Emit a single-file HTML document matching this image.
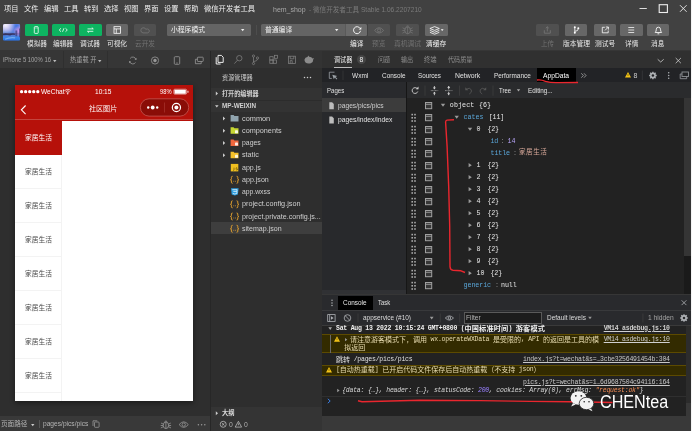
<!DOCTYPE html>
<html lang="zh-CN">
<head>
<meta charset="utf-8">
<title>hem_shop - 微信开发者工具 Stable 1.06.2207210</title>
<style>
*{box-sizing:border-box;margin:0;padding:0}
html,body{width:692px;height:431px;overflow:hidden;background:#2c2c2c}
body{font-family:"Liberation Sans","Noto Sans CJK SC",sans-serif;font-size:7.3px;color:#ddd;position:relative;line-height:1}
#w{position:absolute;left:0;top:0;width:692px;height:431px;will-change:transform;filter:blur(.3px)}
.a{position:absolute;white-space:nowrap}
.t{position:absolute;white-space:pre;line-height:12px;height:12px;transform-origin:0 50%}
.m{font-family:"Liberation Mono","Noto Sans CJK SC",monospace}
.b{font-weight:bold}
.i{font-style:italic}
.u{text-decoration:underline}
svg{position:absolute;overflow:visible}
.tb{position:absolute;top:24px;width:22.5px;height:12px;border-radius:1.5px;background:#676767}
.tb.g{background:#0db461}
.tb.d{background:#505050}
.tb svg{left:0;top:0}
.sel{position:absolute;top:24px;height:12px;background:#646464;border-radius:1.5px}
.cat{position:absolute;left:0;width:47.7px;height:34px;border-bottom:1px solid #f3f3f3;border-right:1px solid #f3f3f3;background:#fff}
.vd{position:absolute;width:1px;background:#4a4a4a}
</style>
</head>
<body>
<div id="w">
<div class="a" style="left:0;top:0;width:692px;height:51px;background:#414141"></div>
<div class="a" style="left:0;top:50.400px;width:692px;height:.7px;background:#363636"></div>
<span id="t0" class="t" style="left:3.50px;top:3.30px;font-size:7.30px;color:#eee;transform:scaleX(0.9936);">项目</span>
<span id="t1" class="t" style="left:24.00px;top:3.30px;font-size:7.30px;color:#eee;transform:scaleX(0.9936);">文件</span>
<span id="t2" class="t" style="left:44.00px;top:3.30px;font-size:7.30px;color:#eee;transform:scaleX(0.9936);">编辑</span>
<span id="t3" class="t" style="left:64.00px;top:3.30px;font-size:7.30px;color:#eee;transform:scaleX(0.9936);">工具</span>
<span id="t4" class="t" style="left:84.00px;top:3.30px;font-size:7.30px;color:#eee;transform:scaleX(0.9936);">转到</span>
<span id="t5" class="t" style="left:104.00px;top:3.30px;font-size:7.30px;color:#eee;transform:scaleX(0.9936);">选择</span>
<span id="t6" class="t" style="left:124.00px;top:3.30px;font-size:7.30px;color:#eee;transform:scaleX(0.9936);">视图</span>
<span id="t7" class="t" style="left:144.00px;top:3.30px;font-size:7.30px;color:#eee;transform:scaleX(0.9936);">界面</span>
<span id="t8" class="t" style="left:164.00px;top:3.30px;font-size:7.30px;color:#eee;transform:scaleX(0.9936);">设置</span>
<span id="t9" class="t" style="left:184.00px;top:3.30px;font-size:7.30px;color:#eee;transform:scaleX(0.9936);">帮助</span>
<span id="t10" class="t" style="left:204.00px;top:3.30px;font-size:7.30px;color:#eee;">微信开发者工具</span>
<span id="t11" class="t" style="left:273.20px;top:3.50px;font-size:7.60px;color:#a8a8a8;transform:scaleX(0.9191);">hem_shop</span>
<span id="t12" class="t" style="left:309.00px;top:3.50px;font-size:7.30px;color:#7a7a7a;transform:scaleX(0.9022);">- 微信开发者工具 Stable 1.06.2207210</span>
<svg style="left:630px;top:0" width="62" height="18" viewBox="630 0 62 18"><path d="M639.500 8.500h7.300" stroke="#ddd" stroke-width="1" fill="none"/><rect x="659.200" y="4.700" width="8.200" height="7.800" stroke="#eee" stroke-width="1.100" fill="none"/><path d="M680 5.200l6.600 6.600M686.600 5.200l-6.600 6.600" stroke="#eee" stroke-width=".9" fill="none"/></svg>
<svg style="left:3px;top:23.800px" width="17.200" height="16.800" viewBox="0 0 17 17" preserveAspectRatio="none"><defs><linearGradient id="av" x1="0" y1="0" x2="0" y2="1"><stop offset="0" stop-color="#b9a8ec"/><stop offset=".3" stop-color="#8f8fe6"/><stop offset=".5" stop-color="#5f86dc"/><stop offset=".58" stop-color="#4a4a86"/><stop offset=".64" stop-color="#5a78d0"/><stop offset=".8" stop-color="#3a86e6"/><stop offset="1" stop-color="#2b6fe2"/></linearGradient><radialGradient id="av2" cx=".15" cy=".08" r=".55"><stop offset="0" stop-color="#fff" stop-opacity=".85"/><stop offset="1" stop-color="#fff" stop-opacity="0"/></radialGradient><radialGradient id="av3" cx=".8" cy=".12" r=".5"><stop offset="0" stop-color="#2f6fe0" stop-opacity=".9"/><stop offset="1" stop-color="#2f6fe0" stop-opacity="0"/></radialGradient><radialGradient id="av4" cx=".95" cy=".42" r=".35"><stop offset="0" stop-color="#e49ae6" stop-opacity=".9"/><stop offset="1" stop-color="#e49ae6" stop-opacity="0"/></radialGradient><clipPath id="avc"><rect width="17" height="17" rx="1.600"/></clipPath></defs><g clip-path="url(#avc)"><rect width="17" height="17" fill="url(#av)"/><rect width="17" height="17" fill="url(#av3)"/><rect width="17" height="17" fill="url(#av2)"/><rect width="17" height="17" fill="url(#av4)"/><path d="M0 10.200q2-1.200 4-.6l2.500.3 3-.3 2.500.2v1.200l-3-.2-2 .8-3-.5-4 .2z" fill="#2a2448" opacity=".8"/><path d="M12.300 6.500h1.800v6h-1.800zM15.800 4.500h1.200v9h-1.200z" fill="#3a3a78" opacity=".7"/><path d="M2 15.500q5-2.500 10-1.500" stroke="#9cc4f6" stroke-width="1.200" fill="none" opacity=".6"/></g></svg>
<div class="tb g" style="left:25px"><svg width="22.500" height="12" viewBox="0 0 22.500 12"><rect x="9.300" y="2.600" width="3.900" height="6.800" rx=".8" stroke="#fff" stroke-width=".8" fill="none"/><path d="M9.300 4h3.900" stroke="#fff" stroke-width=".5"/></svg></div>
<div class="tb g" style="left:52px"><svg width="22.500" height="12" viewBox="0 0 22.500 12"><path d="M9 4.300L7.200 6 9 7.700M13.500 4.300L15.300 6l-1.800 1.700M12 4.200l-1.500 3.600" stroke="#fff" stroke-width=".8" fill="none"/></svg></div>
<div class="tb g" style="left:79px"><svg width="22.500" height="12" viewBox="0 0 22.500 12"><path d="M8.500 4.900h5.800M12.800 3.600l1.500 1.300M14.300 7.300H8.500M10 8.600L8.500 7.300" stroke="#fff" stroke-width=".8" fill="none"/></svg></div>
<div class="tb" style="left:105.500px"><svg width="22.500" height="12" viewBox="0 0 22.500 12"><rect x="8" y="2.700" width="6.500" height="6.600" stroke="#fff" stroke-width=".8" fill="none"/><path d="M8 4.900h6.500M10.300 4.900v4.400" stroke="#fff" stroke-width=".8" fill="none"/></svg></div>
<div class="tb d" style="left:133.500px"><svg width="22.500" height="12" viewBox="0 0 22.500 12"><path d="M9 8.900A2.600 2.600 0 1 1 11.900 5.500A2 2 0 1 1 13.700 8.900Z" stroke="#767676" stroke-width=".8" fill="none"/></svg></div>
<span id="t13" class="t" style="left:26.70px;top:37.70px;font-size:7.00px;color:#e6e6e6;transform:scaleX(0.9524);">模拟器</span>
<span id="t14" class="t" style="left:53.40px;top:37.70px;font-size:7.00px;color:#e6e6e6;transform:scaleX(0.9524);">编辑器</span>
<span id="t15" class="t" style="left:80.20px;top:37.70px;font-size:7.00px;color:#e6e6e6;transform:scaleX(0.9524);">调试器</span>
<span id="t16" class="t" style="left:107.00px;top:37.70px;font-size:7.00px;color:#e6e6e6;transform:scaleX(0.9524);">可视化</span>
<span id="t17" class="t" style="left:134.50px;top:37.70px;font-size:7.00px;color:#727272;transform:scaleX(0.9524);">云开发</span>
<div class="sel" style="left:167px;width:84.200px"></div>
<span id="t18" class="t" style="left:171.30px;top:24.00px;font-size:7.00px;color:#f0f0f0;transform:scaleX(0.9714);">小程序模式</span>
<svg style="left:240.500px;top:28.500px" width="3.400" height="2.600" viewBox="0 0 4 3"><path d="M0 0h4L2 2.600z" fill="#eee"/></svg>
<div class="vd" style="left:256.200px;top:25px;height:10px;background:#4d4d4d"></div>
<div class="sel" style="left:261.200px;width:84px;border-radius:1.500px 0 0 1.500px"></div>
<span id="t19" class="t" style="left:265.30px;top:24.00px;font-size:7.00px;color:#f0f0f0;transform:scaleX(0.9714);">普通编译</span>
<svg style="left:335px;top:28.500px" width="3.400" height="2.600" viewBox="0 0 4 3"><path d="M0 0h4L2 2.600z" fill="#eee"/></svg>
<div class="tb" style="left:345.200px;width:22.300px;border-radius:0 1.500px 1.500px 0;background:#6b6b6b;border-left:.5px solid #5a5a5a"><svg width="22" height="12" viewBox="0 0 22 12"><path d="M14 4.300A3.500 3.500 0 1 0 14.500 6.800" stroke="#fff" stroke-width=".9" fill="none"/><path d="M15.300 3v2.600h-2.600z" fill="#fff"/></svg></div>
<div class="tb d" style="left:367.600px;border-radius:0 1.500px 1.500px 0"><svg width="22.500" height="12" viewBox="0 0 22.500 12"><path d="M6.600 6.400q4.500-5.400 9 0q-4.500 5.400-9 0z" stroke="#777" stroke-width=".8" fill="none"/><circle cx="11.100" cy="6.400" r="1.600" stroke="#777" stroke-width=".8" fill="none"/></svg></div>
<div class="tb d" style="left:396.300px"><svg width="22.500" height="12" viewBox="0 0 22.500 12"><ellipse cx="11.600" cy="6.300" rx="2.800" ry="3.500" stroke="#777" stroke-width=".8" fill="none"/><path d="M11.600 2.800v7M10.300 2.400q1.300-1.200 2.600 0M6.600 3.800l2.500 1.300M16.600 3.800l-2.500 1.300M6.400 9.200l2.700-1.500M16.800 9.200l-2.700-1.500M6.300 6.500h2.500M16.900 6.500h-2.500" stroke="#777" stroke-width=".7" fill="none"/></svg></div>
<div class="tb" style="left:425.300px"><svg width="22.500" height="12" viewBox="0 0 22.500 12"><path d="M4.900 4.500l4.700-1.900 4.700 1.900-4.700 1.900zM4.900 6.400l4.700 1.900 4.700-1.900M4.900 8.300l4.700 1.900 4.700-1.900" stroke="#fff" stroke-width=".8" fill="none" stroke-linejoin="round"/><path d="M15.800 5.200h2.800L17.200 7z" fill="#fff"/></svg></div>
<span id="t20" class="t" style="left:350.00px;top:37.70px;font-size:7.00px;color:#f0f0f0;transform:scaleX(0.9571);">编译</span>
<span id="t21" class="t" style="left:372.30px;top:37.70px;font-size:7.00px;color:#727272;transform:scaleX(0.9571);">预览</span>
<span id="t22" class="t" style="left:394.00px;top:37.70px;font-size:7.00px;color:#727272;transform:scaleX(0.9643);">真机调试</span>
<span id="t23" class="t" style="left:426.30px;top:37.70px;font-size:7.00px;color:#f0f0f0;transform:scaleX(0.9714);">清缓存</span>
<div class="tb d" style="left:536px"><svg width="22.500" height="12" viewBox="0 0 22.500 12"><path d="M8.300 6.200v3h6v-3M11.300 7.500V2.800M9.800 4.200l1.500-1.400 1.500 1.400" stroke="#777" stroke-width=".8" fill="none"/></svg></div>
<div class="tb" style="left:564.800px"><svg width="22.500" height="12" viewBox="0 0 22.500 12"><path d="M9.800 3.500v5M9.800 7.300q3.500 0 3.500-2.800" stroke="#fff" stroke-width=".8" fill="none"/><circle cx="9.800" cy="3.200" r="1" fill="#fff"/><circle cx="9.800" cy="8.800" r="1" fill="#fff"/><circle cx="13.300" cy="4.300" r="1" fill="#fff"/></svg></div>
<div class="tb" style="left:593.700px"><svg width="22.500" height="12" viewBox="0 0 22.500 12"><path d="M10.800 3.300H8.300v5.500h5.900V6.500M11.800 3h2.600v2.600M14.200 3.200L11 6.400" stroke="#fff" stroke-width=".8" fill="none"/></svg></div>
<div class="tb" style="left:620.200px"><svg width="22.500" height="12" viewBox="0 0 22.500 12"><path d="M8.300 3.500h5.900M8.300 6h5.900M8.300 8.500h5.900" stroke="#fff" stroke-width=".75" fill="none"/></svg></div>
<div class="tb" style="left:646.900px"><svg width="22.500" height="12" viewBox="0 0 22.500 12"><path d="M8.200 8.500h6.400q-1.100-1.100-1.100-3.200a2.100 2.100 0 0 0-4.200 0q0 2.100-1.100 3.200zM10.500 9.800h1.800" stroke="#fff" stroke-width=".85" fill="none"/></svg></div>
<span id="t24" class="t" style="left:540.80px;top:37.70px;font-size:7.00px;color:#727272;transform:scaleX(0.9214);">上传</span>
<span id="t25" class="t" style="left:562.50px;top:37.70px;font-size:7.00px;color:#e6e6e6;transform:scaleX(0.9643);">版本管理</span>
<span id="t26" class="t" style="left:595.00px;top:37.70px;font-size:7.00px;color:#e6e6e6;transform:scaleX(0.9619);">测试号</span>
<span id="t27" class="t" style="left:624.70px;top:37.70px;font-size:7.00px;color:#e6e6e6;transform:scaleX(0.9500);">详情</span>
<span id="t28" class="t" style="left:651.30px;top:37.70px;font-size:7.00px;color:#e6e6e6;transform:scaleX(0.9500);">消息</span>
<div class="a" style="left:0;top:51px;width:211px;height:17.300px;background:#363636"></div>
<div class="a" style="left:0;top:68.300px;width:211px;height:348px;background:#2e2e2e"></div>
<span id="t29" class="t" style="left:3.00px;top:54.30px;font-size:6.80px;color:#a4a4a4;transform:scaleX(0.8639);">iPhone 5 100% 16</span>
<svg style="left:53px;top:59.500px" width="3.500" height="2.500" viewBox="0 0 4 3"><path d="M0 0h4L2 2.600z" fill="#bbb"/></svg>
<div class="vd" style="left:63px;top:51px;height:17px;background:#2f2f2f"></div>
<span id="t30" class="t" style="left:69.50px;top:54.30px;font-size:6.80px;color:#a4a4a4;transform:scaleX(0.9113);">热重载 开</span>
<svg style="left:97.500px;top:59.500px" width="3.500" height="2.500" viewBox="0 0 4 3"><path d="M0 0h4L2 2.600z" fill="#bbb"/></svg>
<div class="vd" style="left:107px;top:51px;height:17px;background:#2f2f2f"></div>
<svg style="left:0;top:0" width="211" height="70" viewBox="0 0 211 70"><g stroke="#989898" stroke-width=".8" fill="none"><path d="M135.900 59.500a3.200 3.200 0 0 0-5.800-1M129.700 61.500a3.200 3.200 0 0 0 5.800 1"/><circle cx="155" cy="60.500" r="3.600"/><rect x="174.300" y="56.700" width="5.400" height="7.600" rx=".9"/><path d="M176.300 63h1.400"/><rect x="197.400" y="57.200" width="5.800" height="4.300" rx=".6"/><path d="M197.400 59.300h-2v4.400h5.800v-2.200"/></g><circle cx="155" cy="60.500" r="1.700" fill="#989898"/><path d="M136.500 57.800v1.900h-1.900zM129.100 63.200v-1.900h1.900z" fill="#989898"/></svg>
<div class="a" style="left:14.600px;top:85px;width:178.100px;height:316.200px;background:#fff;overflow:hidden;box-shadow:0 2px 5px rgba(0,0,0,.4)">
<div class="a" style="left:0;top:0;width:179px;height:35.800px;background:#b6110a"></div>
<div class="a" style="left:0;top:34.400px;width:179px;height:.6px;background:#c4453e"></div>
<div class="cat" style="top:35.8px;background:#b6110a;border-color:#b6110a"></div>
<div class="cat" style="top:69.8px"></div>
<div class="cat" style="top:103.8px"></div>
<div class="cat" style="top:137.8px"></div>
<div class="cat" style="top:171.8px"></div>
<div class="cat" style="top:205.8px"></div>
<div class="cat" style="top:239.8px"></div>
<div class="cat" style="top:273.8px"></div>
<div class="cat" style="top:307.8px"></div>
</div>
<span id="t31" class="t" style="left:24.80px;top:132.10px;font-size:6.80px;color:#fff;transform:scaleX(0.9894);">家居生活</span>
<span id="t32" class="t" style="left:24.80px;top:166.10px;font-size:6.80px;color:#484848;transform:scaleX(0.9894);">家居生活</span>
<span id="t33" class="t" style="left:24.80px;top:200.10px;font-size:6.80px;color:#484848;transform:scaleX(0.9894);">家居生活</span>
<span id="t34" class="t" style="left:24.80px;top:234.10px;font-size:6.80px;color:#484848;transform:scaleX(0.9894);">家居生活</span>
<span id="t35" class="t" style="left:24.80px;top:268.10px;font-size:6.80px;color:#484848;transform:scaleX(0.9894);">家居生活</span>
<span id="t36" class="t" style="left:24.80px;top:302.10px;font-size:6.80px;color:#484848;transform:scaleX(0.9894);">家居生活</span>
<span id="t37" class="t" style="left:24.80px;top:336.10px;font-size:6.80px;color:#484848;transform:scaleX(0.9894);">家居生活</span>
<span id="t38" class="t" style="left:24.80px;top:370.10px;font-size:6.80px;color:#484848;transform:scaleX(0.9894);">家居生活</span>
<svg style="left:0;top:0" width="211" height="125" viewBox="0 0 211 125"><g fill="#fff"><circle cx="21.600" cy="91.700" r="1.650"/><circle cx="25.650" cy="91.700" r="1.650"/><circle cx="29.700" cy="91.700" r="1.650"/><circle cx="33.750" cy="91.700" r="1.650"/><circle cx="37.800" cy="91.700" r="1.650"/><circle cx="67.700" cy="93.700" r=".7"/><rect x="174.500" y="89.700" width="11.300" height="4" rx=".5"/><path d="M187.500 90.700h.9v2h-.9z"/></g><rect x="173.800" y="89.200" width="12.800" height="5" rx="1" fill="none" stroke="#fff" stroke-width=".5"/><path d="M64.600 90.700a4.400 4.400 0 0 1 6.200 0M65.650 91.800a2.900 2.900 0 0 1 4.100 0M66.700 92.800a1.500 1.500 0 0 1 2 0" stroke="#fff" stroke-width=".75" fill="none"/><path d="M25.600 105.500l-4.200 4.300 4.200 4.300" stroke="#fff" stroke-width="1.100" fill="none"/><rect x="140.400" y="98.800" width="48.300" height="17.300" rx="8.650" fill="#8a0d07" stroke="#c9625c" stroke-width=".7"/><path d="M164.500 102.500v10" stroke="#b5463f" stroke-width=".5"/><g fill="#fff"><circle cx="148.200" cy="107.500" r="1.200"/><circle cx="152.700" cy="107.500" r="1.900"/><circle cx="157.200" cy="107.500" r="1.200"/><circle cx="176.400" cy="107.500" r="2"/></g><circle cx="176.400" cy="107.500" r="4.100" fill="none" stroke="#fff" stroke-width="1.200"/></svg>
<span id="t39" class="t" style="left:41.00px;top:85.70px;font-size:7.00px;color:#fff;transform:scaleX(0.9376);">WeChat</span>
<span id="t40" class="t" style="left:95.30px;top:85.70px;font-size:6.90px;color:#fff;transform:scaleX(0.9507);">10:15</span>
<span id="t41" class="t" style="left:159.70px;top:85.70px;font-size:6.30px;color:#fff;transform:scaleX(0.9120);">98%</span>
<span id="t42" class="t" style="left:89.40px;top:103.30px;font-size:7.20px;color:#fff;transform:scaleX(0.9803);">社区图片</span>
<div class="a" style="left:0;top:416px;width:692px;height:15px;background:#393939"></div>
<span id="t43" class="t" style="left:1.00px;top:418.00px;font-size:6.80px;color:#b4b4b4;transform:scaleX(0.9747);">页面路径</span>
<svg style="left:30.500px;top:423.500px" width="3.500" height="2.500" viewBox="0 0 4 3"><path d="M0 0h4L2 2.600z" fill="#ccc"/></svg>
<div class="vd" style="left:38.500px;top:420px;height:8px;background:#555"></div>
<span id="t44" class="t" style="left:43.00px;top:418.00px;font-size:6.80px;color:#b4b4b4;transform:scaleX(0.9745);">pages/pics/pics</span>
<svg style="left:0;top:416px" width="211" height="15" viewBox="0 416 211 15"><g stroke="#9c9c9c" stroke-width=".75" fill="none"><rect x="94.500" y="422" width="4.600" height="5.300" rx=".7"/><path d="M93 426v-5.200h4.300"/><ellipse cx="165.900" cy="425.300" rx="2.700" ry="3.300"/><path d="M165.900 422v6.600M164.600 421.600q1.300-1.200 2.600 0M161 423l2.400 1.200M170.800 423l-2.400 1.200M160.800 428l2.600-1.400M171 428l-2.600-1.400M160.700 425.500h2.500M171.100 425.500h-2.500"/><path d="M179.100 424.600q4.600-5.600 9.200 0q-4.600 5.600-9.200 0z"/><circle cx="183.700" cy="424.600" r="1.700"/></g><g fill="#999"><circle cx="198.400" cy="424.700" r=".75"/><circle cx="201.600" cy="424.700" r=".75"/><circle cx="204.800" cy="424.700" r=".75"/></g></svg>
<div class="a" style="left:211px;top:51px;width:111px;height:365px;background:#2e2e2e"></div>
<div class="a" style="left:211px;top:51px;width:111px;height:16.800px;background:#333"></div>
<div class="a" style="left:209.900px;top:51px;width:1px;height:380px;background:#272727"></div>
<svg style="left:211px;top:51px" width="111" height="17" viewBox="211 51 111 17"><g stroke="#fff" stroke-width=".9" fill="none"><path d="M216.200 57.200v6.800h4.400"/><path d="M218 55.400h3.400l1.800 1.800v5.200h-5.200z"/></g><g stroke="#828282" stroke-width=".75" fill="none"><circle cx="239.300" cy="58.200" r="2.700"/><path d="M237.400 60.300l-3 3.300"/><circle cx="253.500" cy="56" r="1.100"/><circle cx="253.500" cy="63.500" r="1.100"/><circle cx="257.500" cy="58" r="1.100"/><path d="M253.500 57.100v5.300M257.500 59.100q0 2-4 2.500"/><rect x="269.800" y="60" width="3.300" height="3.300"/><rect x="273.100" y="60" width="3.300" height="3.300"/><rect x="269.800" y="56.700" width="3.300" height="3.300"/><rect x="274.500" y="55.300" width="3" height="3"/><rect x="288.400" y="56.200" width="7.200" height="7.200"/><path d="M290.200 56.200v2.600h3.600v-2.600M290.200 63.400v-2.800h2v2.800"/></g><path d="M304.500 59.500q.5-2.200 3-2.500l.8-1.500.9 1.300q2.500.2 3.300 1.700l1.500-.5-.8 1.500q.3 2.500-2.400 3.700-3.300 1-5.300-.8-1.200-1.300-1-2.900z" fill="#8c8c8c"/></svg>
<span id="t45" class="t" style="left:222.30px;top:71.70px;font-size:6.60px;color:#c8c8c8;transform:scaleX(0.9312);">资源管理器</span>
<svg style="left:303px;top:76px" width="10" height="3" viewBox="0 0 10 3"><g fill="#ccc"><circle cx="1.500" cy="1.500" r=".75"/><circle cx="4.500" cy="1.500" r=".75"/><circle cx="7.500" cy="1.500" r=".75"/></g></svg>
<div class="a" style="left:211px;top:87.600px;width:111px;height:24.400px;background:#333"></div>
<div class="a" style="left:211px;top:99.600px;width:111px;height:.5px;background:#2c2c2c"></div>
<svg style="left:211px;top:87px" width="111" height="30" viewBox="211 87 111 30"><path d="M215.800 91.500l2.200 2-2.200 2z" fill="#ccc"/><path d="M215 105.200h3.600l-1.800 2.300z" fill="#ccc"/></svg>
<span id="t46" class="t b" style="left:222.30px;top:87.60px;font-size:6.60px;color:#d0d0d0;transform:scaleX(0.9276);">打开的编辑器</span>
<span id="t47" class="t b" style="left:222.30px;top:100.20px;font-size:6.70px;color:#d0d0d0;transform:scaleX(0.9488);">MP-WEIXIN</span>
<div class="a" style="left:211px;top:222px;width:111px;height:12.100px;background:#3e3e3e"></div>
<span id="t48" class="t" style="left:242.20px;top:112.60px;font-size:7.60px;color:#cfcfcf;transform:scaleX(0.9682);">common</span>
<span id="t49" class="t" style="left:242.20px;top:124.84px;font-size:7.60px;color:#cfcfcf;transform:scaleX(0.9571);">components</span>
<span id="t50" class="t" style="left:242.20px;top:137.08px;font-size:7.60px;color:#cfcfcf;transform:scaleX(0.9081);">pages</span>
<span id="t51" class="t" style="left:242.20px;top:149.32px;font-size:7.60px;color:#cfcfcf;transform:scaleX(0.9473);">static</span>
<span id="t52" class="t" style="left:242.20px;top:161.56px;font-size:7.60px;color:#cfcfcf;transform:scaleX(0.9277);">app.js</span>
<span id="t53" class="t" style="left:242.20px;top:173.80px;font-size:7.60px;color:#cfcfcf;transform:scaleX(0.9332);">app.json</span>
<span id="t54" class="t" style="left:242.20px;top:186.04px;font-size:7.60px;color:#cfcfcf;transform:scaleX(0.8940);">app.wxss</span>
<span id="t55" class="t" style="left:242.20px;top:198.28px;font-size:7.60px;color:#cfcfcf;transform:scaleX(0.9556);">project.config.json</span>
<span id="t56" class="t" style="left:242.20px;top:210.52px;font-size:7.60px;color:#cfcfcf;transform:scaleX(0.9381);">project.private.config.js...</span>
<span id="t57" class="t" style="left:242.20px;top:222.76px;font-size:7.60px;color:#cfcfcf;transform:scaleX(0.9287);">sitemap.json</span>
<svg style="left:211px;top:110px" width="111" height="130" viewBox="211 110 111 130"><path d="M223 116.6l2.200 2-2.200 2z" fill="#ccc"/><path d="M230.600 115.1h3l.8.900h4.100v5.600h-7.900z" fill="#90a4ae"/><path d="M223 128.8l2.200 2-2.200 2z" fill="#ccc"/><path d="M230.600 127.3h3l.8.900h4.100v5.600h-7.900z" fill="#c6d733"/><rect x="235" y="130.3" width="3" height="3" rx=".6" fill="#fff" opacity=".85"/><path d="M223 141.1l2.200 2-2.200 2z" fill="#ccc"/><path d="M230.600 139.6h3l.8.900h4.100v5.600h-7.900z" fill="#f0673e"/><rect x="235" y="142.6" width="3" height="3" rx=".6" fill="#fff" opacity=".85"/><path d="M223 153.3l2.200 2-2.200 2z" fill="#ccc"/><path d="M230.600 151.8h3l.8.900h4.100v5.600h-7.900z" fill="#f6c12a"/><rect x="235" y="154.8" width="3" height="3" rx=".6" fill="#fff" opacity=".85"/><rect x="230.800" y="163.9" width="7.500" height="7.500" fill="#f0c020"/><path d="M234 167.6v2.200q0 .8-.9.500M237.200 167.8q-1.300-.4-1.300.4t1.300.8 0 1q-.8 0-1.400-.3" stroke="#5a4500" stroke-width=".6" fill="none"/><path d="M232.600 176.3q-1.200 0-1.200 1v1.500q0 1-.9 1 .9 0 .9 1v1.500q0 1 1.200 1M236.600 176.3q1.200 0 1.200 1v1.500q0 1 .9 1-.9 0-.9 1v1.500q0 1-1.200 1" stroke="#eea82e" stroke-width=".9" fill="none"/><path d="M233.400 181.3h.8M235 181.3h.8" stroke="#eea82e" stroke-width=".8"/><path d="M231 188.3h7.600l-.7 6.300-3.100 1-3.100-1z" fill="#2d9ee0"/><path d="M232.300 189.7h4.800l-.2 1.700h-3.600M237 191.6l-.2 1.800-2 .6-2-.6" stroke="#fff" stroke-width=".7" fill="none"/><path d="M232.600 200.8q-1.200 0-1.200 1v1.500q0 1-.9 1 .9 0 .9 1v1.500q0 1 1.200 1M236.600 200.8q1.200 0 1.200 1v1.500q0 1 .9 1-.9 0-.9 1v1.500q0 1-1.200 1" stroke="#eea82e" stroke-width=".9" fill="none"/><path d="M233.400 205.8h.8M235 205.8h.8" stroke="#eea82e" stroke-width=".8"/><path d="M232.600 213.0q-1.200 0-1.200 1v1.500q0 1-.9 1 .9 0 .9 1v1.500q0 1 1.200 1M236.600 213.0q1.200 0 1.200 1v1.500q0 1 .9 1-.9 0-.9 1v1.500q0 1-1.200 1" stroke="#eea82e" stroke-width=".9" fill="none"/><path d="M233.400 218.0h.8M235 218.0h.8" stroke="#eea82e" stroke-width=".8"/><path d="M232.600 225.3q-1.200 0-1.200 1v1.500q0 1-.9 1 .9 0 .9 1v1.500q0 1 1.200 1M236.600 225.3q1.200 0 1.200 1v1.500q0 1 .9 1-.9 0-.9 1v1.500q0 1-1.200 1" stroke="#eea82e" stroke-width=".9" fill="none"/><path d="M233.400 230.3h.8M235 230.3h.8" stroke="#eea82e" stroke-width=".8"/></svg>
<div class="a" style="left:211px;top:407px;width:111px;height:24px;background:#343434"></div>
<svg style="left:211px;top:407px" width="111" height="24" viewBox="211 407 111 24"><path d="M215.800 411.200l2.200 2-2.200 2z" fill="#ccc"/><g stroke="#c8c8c8" stroke-width=".7" fill="none"><circle cx="223.200" cy="424.300" r="3"/><path d="M221.900 423l2.600 2.600M224.500 423l-2.600 2.600"/><path d="M238.400 421.300l3.200 5.800h-6.400z"/><path d="M238.400 423.300v2"/></g></svg>
<span id="t58" class="t b" style="left:222.30px;top:407.30px;font-size:6.60px;color:#d8d8d8;transform:scaleX(0.9479);">大纲</span>
<span id="t59" class="t" style="left:229.00px;top:419.00px;font-size:6.80px;color:#b0b0b0;letter-spacing:-0.281px;">0</span>
<span id="t60" class="t" style="left:244.00px;top:419.00px;font-size:6.80px;color:#b0b0b0;letter-spacing:-0.281px;">0</span>
<div class="a" style="left:322px;top:51px;width:370px;height:365px;background:#222"></div>
<div class="a" style="left:321.500px;top:51px;width:1px;height:365px;background:#1a1a1a"></div>
<div class="a" style="left:322px;top:51px;width:370px;height:17px;background:#303030"></div>
<span id="t61" class="t" style="left:333.60px;top:53.50px;font-size:6.40px;color:#f0f0f0;transform:scaleX(0.9493);">调试器</span>
<div class="a" style="left:333.600px;top:66.600px;width:18.200px;height:.8px;background:#bdbdbd"></div>
<div class="a" style="left:357px;top:55px;width:9px;height:9px;border-radius:5px;background:#454545"></div>
<span id="t62" class="t" style="left:359.60px;top:53.70px;font-size:6.80px;color:#eee;letter-spacing:0.019px;">8</span>
<span id="t63" class="t" style="left:377.80px;top:53.50px;font-size:6.40px;color:#8e8e8e;transform:scaleX(0.9311);">问题</span>
<span id="t64" class="t" style="left:400.90px;top:53.50px;font-size:6.40px;color:#8e8e8e;transform:scaleX(0.9545);">输出</span>
<span id="t65" class="t" style="left:424.00px;top:53.50px;font-size:6.40px;color:#8e8e8e;transform:scaleX(0.9858);">终端</span>
<span id="t66" class="t" style="left:447.50px;top:53.50px;font-size:6.40px;color:#8e8e8e;transform:scaleX(0.9584);">代码质量</span>
<svg style="left:650px;top:51px" width="42" height="17" viewBox="650 51 42 17"><path d="M657.700 59.300l3 2.700 3-2.700" stroke="#d0d0d0" stroke-width=".8" fill="none"/><path d="M675.700 58l5.200 5.200M680.900 58l-5.200 5.200" stroke="#d0d0d0" stroke-width=".8" fill="none"/></svg>
<div class="a" style="left:322px;top:68px;width:370px;height:14px;background:#222326"></div>
<div class="a" style="left:536.800px;top:68px;width:39.400px;height:14px;background:#000"></div>
<svg style="left:322px;top:68px" width="370" height="16" viewBox="322 68 370 16"><g stroke="#9aa0a6" stroke-width=".8" fill="none"><path d="M334.500 72.200h-5.200v6.200h2.500"/><path d="M332.300 74.800l1.500 4.500 1-1.700 1.800 1.800.7-.7-1.800-1.800 1.700-.8z" fill="#9aa0a6" stroke="none"/></g><path d="M343 70.500v9.500M642.300 70.500v9.500" stroke="#3f4042" stroke-width=".6"/><path d="M581.300 73.300l2 2.200-2 2.200M584 73.300l2 2.200-2 2.200" stroke="#bbb" stroke-width=".7" fill="none"/><path d="M628 72l3 5.600h-6z" fill="#f5c518"/><path d="M628 74v2" stroke="#4a3a00" stroke-width=".6"/><g fill="#aeb1b5"><circle cx="652.900" cy="75.500" r="2.900"/><g stroke="#aeb1b5" stroke-width="1.300"><path d="M652.900 71.700v7.600M649.100 75.500h7.600M650.200 72.800l5.400 5.400M655.600 72.800l-5.400 5.400"/></g><circle cx="668.700" cy="72.800" r=".75"/><circle cx="668.700" cy="75.500" r=".75"/><circle cx="668.700" cy="78.200" r=".75"/></g><circle cx="652.900" cy="75.500" r="1.250" fill="#222326"/><g stroke="#8e9196" stroke-width=".9" fill="none"><rect x="682" y="72" width="6.500" height="4.500"/><path d="M682 74h-1.800v4.700h6.500v-2.200"/></g></svg>
<span id="t67" class="t" style="left:352.20px;top:69.60px;font-size:7.00px;color:#e2e2e2;transform:scaleX(0.9314);">Wxml</span>
<span id="t68" class="t" style="left:381.90px;top:69.60px;font-size:7.00px;color:#e2e2e2;transform:scaleX(0.9187);">Console</span>
<span id="t69" class="t" style="left:418.40px;top:69.60px;font-size:7.00px;color:#e2e2e2;transform:scaleX(0.8954);">Sources</span>
<span id="t70" class="t" style="left:454.80px;top:69.60px;font-size:7.00px;color:#e2e2e2;transform:scaleX(0.9810);">Network</span>
<span id="t71" class="t" style="left:493.50px;top:69.60px;font-size:7.00px;color:#e2e2e2;transform:scaleX(0.9182);">Performance</span>
<span id="t72" class="t" style="left:543.00px;top:69.60px;font-size:7.00px;color:#fff;transform:scaleX(0.9541);">AppData</span>
<span id="t73" class="t" style="left:633.50px;top:69.60px;font-size:7.00px;color:#ccc;letter-spacing:-0.406px;">8</span>
<div class="a" style="left:322px;top:82px;width:84px;height:212.500px;background:#28292c"></div>
<div class="a" style="left:322px;top:289.500px;width:84px;height:4.500px;background:#303134"></div>
<div class="a" style="left:322px;top:82px;width:84px;height:16.200px;background:#292a2d"></div>
<div class="a" style="left:322px;top:98.200px;width:84px;height:14.300px;background:#3c3c3c"></div>
<div class="a" style="left:406px;top:82px;width:1.400px;height:212.500px;background:#161616"></div>
<span id="t74" class="t" style="left:327.00px;top:85.30px;font-size:7.00px;color:#e0e0e0;transform:scaleX(0.8661);">Pages</span>
<svg style="left:322px;top:98px" width="84" height="30" viewBox="322 98 84 30"><g fill="#bdbdbd"><path d="M329.300 102.300h2.800l1.700 1.700v5.300h-4.500z"/><path d="M329.300 116.600h2.800l1.700 1.700v5.300h-4.500z"/></g></svg>
<span id="t75" class="t" style="left:338.20px;top:100.00px;font-size:7.00px;color:#cfcfcf;transform:scaleX(0.9528);">pages/pics/pics</span>
<span id="t76" class="t" style="left:338.20px;top:114.20px;font-size:7.00px;color:#e4e4e4;transform:scaleX(0.9657);">pages/index/index</span>
<div class="a" style="left:407.400px;top:82px;width:284.600px;height:16.200px;background:#2a2b2d"></div>
<div class="a" style="left:684.200px;top:98.200px;width:6.800px;height:196px;background:#1a1a1a"></div>
<div class="a" style="left:684.200px;top:98.200px;width:6.800px;height:158.300px;background:#353535"></div>
<svg style="left:407px;top:82px" width="130" height="17" viewBox="407 82 130 17"><g stroke="#cfcfcf" stroke-width=".9" fill="none"><path d="M417.300 88.700a2.900 2.900 0 1 0 .5 2.800"/><path d="M430.800 90.600h7.400M445 90.600h7.400" stroke-width=".6" stroke-dasharray=".9 .5"/><path d="M434.400 86v3M434.400 95.200v-3M448.700 89.400v-3.400M448.700 91.800v3.400"/></g><g fill="#cfcfcf"><path d="M418.500 86.400v2.800h-2.800z"/><path d="M432.900 87.600h3l-1.500 1.800zM432.900 93.600h3l-1.500-1.800zM447.200 88h3l-1.500-1.900zM447.200 93.200h3l-1.500 1.900z"/><path d="M516.800 89.200h3.400l-1.700 2.400z" fill="#aaa"/></g><g stroke="#555" stroke-width=".9" fill="none"><path d="M466.300 89.300q3.500-2.300 5 .5 1 2.700-2 4.200"/><path d="M485.200 89.300q-3.500-2.300-5 .5-1 2.700 2 4.200"/></g><path d="M465.300 87.300v3h3zM486.200 87.300v3h-3z" fill="#555"/><path d="M425 85.500v10.200M459.500 85.500v10.200M493 85.500v10.200" stroke="#444" stroke-width=".6"/></svg>
<span id="t77" class="t" style="left:499.00px;top:84.70px;font-size:6.80px;color:#e4e4e4;transform:scaleX(0.8737);">Tree</span>
<span id="t78" class="t" style="left:528.40px;top:84.70px;font-size:6.80px;color:#e4e4e4;transform:scaleX(0.9299);">Editing...</span>
<span id="t79" class="t m" style="left:449.80px;top:99.20px;font-size:6.67px;color:#e8e8e8;letter-spacing:0.089px;">object</span>
<span id="t80" class="t m" style="left:479.00px;top:99.20px;font-size:6.67px;color:#e8e8e8;letter-spacing:0.005px;">{6}</span>
<span id="t81" class="t m" style="left:463.60px;top:111.20px;font-size:6.67px;color:#5aa6d8;letter-spacing:-0.017px;">cates</span>
<span id="t82" class="t m" style="left:488.80px;top:111.20px;font-size:6.67px;color:#e8e8e8;letter-spacing:-0.196px;">[11]</span>
<span id="t83" class="t m" style="left:476.60px;top:123.20px;font-size:6.67px;color:#e8e8e8;">0</span>
<span id="t84" class="t m" style="left:487.40px;top:123.20px;font-size:6.67px;color:#e8e8e8;letter-spacing:-0.128px;">{2}</span>
<span id="t85" class="t m" style="left:490.50px;top:135.20px;font-size:6.67px;color:#5aa6d8;letter-spacing:-0.250px;">id</span>
<span id="t86" class="t m" style="left:500.60px;top:135.20px;font-size:6.67px;color:#888;letter-spacing:-1.000px;">:</span>
<span id="t87" class="t m" style="left:507.40px;top:135.20px;font-size:6.67px;color:#b5a2f5;letter-spacing:0.100px;">14</span>
<span id="t88" class="t m" style="left:490.50px;top:147.20px;font-size:6.67px;color:#5aa6d8;letter-spacing:-0.097px;">title</span>
<span id="t89" class="t m" style="left:513.00px;top:147.20px;font-size:6.67px;color:#888;letter-spacing:-1.000px;">:</span>
<span id="t90" class="t m" style="left:519.00px;top:147.20px;font-size:6.60px;color:#d9a99a;letter-spacing:0.531px;">家居生活</span>
<span id="t91" class="t m" style="left:476.60px;top:159.20px;font-size:6.67px;color:#e8e8e8;">1</span>
<span id="t92" class="t m" style="left:487.40px;top:159.20px;font-size:6.67px;color:#e8e8e8;letter-spacing:-0.128px;">{2}</span>
<span id="t93" class="t m" style="left:476.60px;top:171.20px;font-size:6.67px;color:#e8e8e8;">2</span>
<span id="t94" class="t m" style="left:487.40px;top:171.20px;font-size:6.67px;color:#e8e8e8;letter-spacing:-0.128px;">{2}</span>
<span id="t95" class="t m" style="left:476.60px;top:183.20px;font-size:6.67px;color:#e8e8e8;">3</span>
<span id="t96" class="t m" style="left:487.40px;top:183.20px;font-size:6.67px;color:#e8e8e8;letter-spacing:-0.128px;">{2}</span>
<span id="t97" class="t m" style="left:476.60px;top:195.20px;font-size:6.67px;color:#e8e8e8;">4</span>
<span id="t98" class="t m" style="left:487.40px;top:195.20px;font-size:6.67px;color:#e8e8e8;letter-spacing:-0.128px;">{2}</span>
<span id="t99" class="t m" style="left:476.60px;top:207.20px;font-size:6.67px;color:#e8e8e8;">5</span>
<span id="t100" class="t m" style="left:487.40px;top:207.20px;font-size:6.67px;color:#e8e8e8;letter-spacing:-0.128px;">{2}</span>
<span id="t101" class="t m" style="left:476.60px;top:219.20px;font-size:6.67px;color:#e8e8e8;">6</span>
<span id="t102" class="t m" style="left:487.40px;top:219.20px;font-size:6.67px;color:#e8e8e8;letter-spacing:-0.128px;">{2}</span>
<span id="t103" class="t m" style="left:476.60px;top:231.20px;font-size:6.67px;color:#e8e8e8;">7</span>
<span id="t104" class="t m" style="left:487.40px;top:231.20px;font-size:6.67px;color:#e8e8e8;letter-spacing:-0.128px;">{2}</span>
<span id="t105" class="t m" style="left:476.60px;top:243.20px;font-size:6.67px;color:#e8e8e8;">8</span>
<span id="t106" class="t m" style="left:487.40px;top:243.20px;font-size:6.67px;color:#e8e8e8;letter-spacing:-0.128px;">{2}</span>
<span id="t107" class="t m" style="left:476.60px;top:255.20px;font-size:6.67px;color:#e8e8e8;">9</span>
<span id="t108" class="t m" style="left:487.40px;top:255.20px;font-size:6.67px;color:#e8e8e8;letter-spacing:-0.128px;">{2}</span>
<span id="t109" class="t m" style="left:476.60px;top:267.20px;font-size:6.67px;color:#e8e8e8;">10</span>
<span id="t110" class="t m" style="left:490.50px;top:267.20px;font-size:6.67px;color:#e8e8e8;letter-spacing:-0.128px;">{2}</span>
<span id="t111" class="t m" style="left:463.60px;top:279.20px;font-size:6.67px;color:#5aa6d8;letter-spacing:-0.081px;">generic</span>
<span id="t112" class="t m" style="left:495.00px;top:279.20px;font-size:6.67px;color:#888;letter-spacing:-1.000px;">:</span>
<span id="t113" class="t m" style="left:501.00px;top:279.20px;font-size:6.67px;color:#e8e8e8;letter-spacing:-0.071px;">null</span>
<svg style="left:407px;top:98px" width="120" height="196" viewBox="407 98 120 196"><rect x="425.500" y="102.5" width="6.200" height="6.200" stroke="#a0a0a0" stroke-width="1" fill="#383838"/><path d="M425.500 104.3h6.200" stroke="#a0a0a0" stroke-width=".9"/><rect x="411.400" y="113.8" width="1.600" height="1.600" fill="#a8a8a8"/><rect x="414.200" y="113.8" width="1.600" height="1.600" fill="#a8a8a8"/><rect x="411.400" y="117.0" width="1.600" height="1.600" fill="#a8a8a8"/><rect x="414.200" y="117.0" width="1.600" height="1.600" fill="#a8a8a8"/><rect x="411.400" y="120.2" width="1.600" height="1.600" fill="#a8a8a8"/><rect x="414.200" y="120.2" width="1.600" height="1.600" fill="#a8a8a8"/><rect x="425.500" y="114.5" width="6.200" height="6.200" stroke="#a0a0a0" stroke-width="1" fill="#383838"/><path d="M425.500 116.3h6.200" stroke="#a0a0a0" stroke-width=".9"/><rect x="411.400" y="125.8" width="1.600" height="1.600" fill="#a8a8a8"/><rect x="414.200" y="125.8" width="1.600" height="1.600" fill="#a8a8a8"/><rect x="411.400" y="129.0" width="1.600" height="1.600" fill="#a8a8a8"/><rect x="414.200" y="129.0" width="1.600" height="1.600" fill="#a8a8a8"/><rect x="411.400" y="132.2" width="1.600" height="1.600" fill="#a8a8a8"/><rect x="414.200" y="132.2" width="1.600" height="1.600" fill="#a8a8a8"/><rect x="425.500" y="126.5" width="6.200" height="6.200" stroke="#a0a0a0" stroke-width="1" fill="#383838"/><path d="M425.500 128.3h6.200" stroke="#a0a0a0" stroke-width=".9"/><rect x="411.400" y="137.8" width="1.600" height="1.600" fill="#a8a8a8"/><rect x="414.200" y="137.8" width="1.600" height="1.600" fill="#a8a8a8"/><rect x="411.400" y="141.0" width="1.600" height="1.600" fill="#a8a8a8"/><rect x="414.200" y="141.0" width="1.600" height="1.600" fill="#a8a8a8"/><rect x="411.400" y="144.2" width="1.600" height="1.600" fill="#a8a8a8"/><rect x="414.200" y="144.2" width="1.600" height="1.600" fill="#a8a8a8"/><rect x="425.500" y="138.5" width="6.200" height="6.200" stroke="#a0a0a0" stroke-width="1" fill="#383838"/><path d="M425.500 140.3h6.200" stroke="#a0a0a0" stroke-width=".9"/><rect x="411.400" y="149.8" width="1.600" height="1.600" fill="#a8a8a8"/><rect x="414.200" y="149.8" width="1.600" height="1.600" fill="#a8a8a8"/><rect x="411.400" y="153.0" width="1.600" height="1.600" fill="#a8a8a8"/><rect x="414.200" y="153.0" width="1.600" height="1.600" fill="#a8a8a8"/><rect x="411.400" y="156.2" width="1.600" height="1.600" fill="#a8a8a8"/><rect x="414.200" y="156.2" width="1.600" height="1.600" fill="#a8a8a8"/><rect x="425.500" y="150.5" width="6.200" height="6.200" stroke="#a0a0a0" stroke-width="1" fill="#383838"/><path d="M425.500 152.3h6.200" stroke="#a0a0a0" stroke-width=".9"/><rect x="411.400" y="161.8" width="1.600" height="1.600" fill="#a8a8a8"/><rect x="414.200" y="161.8" width="1.600" height="1.600" fill="#a8a8a8"/><rect x="411.400" y="165.0" width="1.600" height="1.600" fill="#a8a8a8"/><rect x="414.200" y="165.0" width="1.600" height="1.600" fill="#a8a8a8"/><rect x="411.400" y="168.2" width="1.600" height="1.600" fill="#a8a8a8"/><rect x="414.200" y="168.2" width="1.600" height="1.600" fill="#a8a8a8"/><rect x="425.500" y="162.5" width="6.200" height="6.200" stroke="#a0a0a0" stroke-width="1" fill="#383838"/><path d="M425.500 164.3h6.200" stroke="#a0a0a0" stroke-width=".9"/><rect x="411.400" y="173.8" width="1.600" height="1.600" fill="#a8a8a8"/><rect x="414.200" y="173.8" width="1.600" height="1.600" fill="#a8a8a8"/><rect x="411.400" y="177.0" width="1.600" height="1.600" fill="#a8a8a8"/><rect x="414.200" y="177.0" width="1.600" height="1.600" fill="#a8a8a8"/><rect x="411.400" y="180.2" width="1.600" height="1.600" fill="#a8a8a8"/><rect x="414.200" y="180.2" width="1.600" height="1.600" fill="#a8a8a8"/><rect x="425.500" y="174.5" width="6.200" height="6.200" stroke="#a0a0a0" stroke-width="1" fill="#383838"/><path d="M425.500 176.3h6.200" stroke="#a0a0a0" stroke-width=".9"/><rect x="411.400" y="185.8" width="1.600" height="1.600" fill="#a8a8a8"/><rect x="414.200" y="185.8" width="1.600" height="1.600" fill="#a8a8a8"/><rect x="411.400" y="189.0" width="1.600" height="1.600" fill="#a8a8a8"/><rect x="414.200" y="189.0" width="1.600" height="1.600" fill="#a8a8a8"/><rect x="411.400" y="192.2" width="1.600" height="1.600" fill="#a8a8a8"/><rect x="414.200" y="192.2" width="1.600" height="1.600" fill="#a8a8a8"/><rect x="425.500" y="186.5" width="6.200" height="6.200" stroke="#a0a0a0" stroke-width="1" fill="#383838"/><path d="M425.500 188.3h6.200" stroke="#a0a0a0" stroke-width=".9"/><rect x="411.400" y="197.8" width="1.600" height="1.600" fill="#a8a8a8"/><rect x="414.200" y="197.8" width="1.600" height="1.600" fill="#a8a8a8"/><rect x="411.400" y="201.0" width="1.600" height="1.600" fill="#a8a8a8"/><rect x="414.200" y="201.0" width="1.600" height="1.600" fill="#a8a8a8"/><rect x="411.400" y="204.2" width="1.600" height="1.600" fill="#a8a8a8"/><rect x="414.200" y="204.2" width="1.600" height="1.600" fill="#a8a8a8"/><rect x="425.500" y="198.5" width="6.200" height="6.200" stroke="#a0a0a0" stroke-width="1" fill="#383838"/><path d="M425.500 200.3h6.200" stroke="#a0a0a0" stroke-width=".9"/><rect x="411.400" y="209.8" width="1.600" height="1.600" fill="#a8a8a8"/><rect x="414.200" y="209.8" width="1.600" height="1.600" fill="#a8a8a8"/><rect x="411.400" y="213.0" width="1.600" height="1.600" fill="#a8a8a8"/><rect x="414.200" y="213.0" width="1.600" height="1.600" fill="#a8a8a8"/><rect x="411.400" y="216.2" width="1.600" height="1.600" fill="#a8a8a8"/><rect x="414.200" y="216.2" width="1.600" height="1.600" fill="#a8a8a8"/><rect x="425.500" y="210.5" width="6.200" height="6.200" stroke="#a0a0a0" stroke-width="1" fill="#383838"/><path d="M425.500 212.3h6.200" stroke="#a0a0a0" stroke-width=".9"/><rect x="411.400" y="221.8" width="1.600" height="1.600" fill="#a8a8a8"/><rect x="414.200" y="221.8" width="1.600" height="1.600" fill="#a8a8a8"/><rect x="411.400" y="225.0" width="1.600" height="1.600" fill="#a8a8a8"/><rect x="414.200" y="225.0" width="1.600" height="1.600" fill="#a8a8a8"/><rect x="411.400" y="228.2" width="1.600" height="1.600" fill="#a8a8a8"/><rect x="414.200" y="228.2" width="1.600" height="1.600" fill="#a8a8a8"/><rect x="425.500" y="222.5" width="6.200" height="6.200" stroke="#a0a0a0" stroke-width="1" fill="#383838"/><path d="M425.500 224.3h6.200" stroke="#a0a0a0" stroke-width=".9"/><rect x="411.400" y="233.8" width="1.600" height="1.600" fill="#a8a8a8"/><rect x="414.200" y="233.8" width="1.600" height="1.600" fill="#a8a8a8"/><rect x="411.400" y="237.0" width="1.600" height="1.600" fill="#a8a8a8"/><rect x="414.200" y="237.0" width="1.600" height="1.600" fill="#a8a8a8"/><rect x="411.400" y="240.2" width="1.600" height="1.600" fill="#a8a8a8"/><rect x="414.200" y="240.2" width="1.600" height="1.600" fill="#a8a8a8"/><rect x="425.500" y="234.5" width="6.200" height="6.200" stroke="#a0a0a0" stroke-width="1" fill="#383838"/><path d="M425.500 236.3h6.200" stroke="#a0a0a0" stroke-width=".9"/><rect x="411.400" y="245.8" width="1.600" height="1.600" fill="#a8a8a8"/><rect x="414.200" y="245.8" width="1.600" height="1.600" fill="#a8a8a8"/><rect x="411.400" y="249.0" width="1.600" height="1.600" fill="#a8a8a8"/><rect x="414.200" y="249.0" width="1.600" height="1.600" fill="#a8a8a8"/><rect x="411.400" y="252.2" width="1.600" height="1.600" fill="#a8a8a8"/><rect x="414.200" y="252.2" width="1.600" height="1.600" fill="#a8a8a8"/><rect x="425.500" y="246.5" width="6.200" height="6.200" stroke="#a0a0a0" stroke-width="1" fill="#383838"/><path d="M425.500 248.3h6.200" stroke="#a0a0a0" stroke-width=".9"/><rect x="411.400" y="257.8" width="1.600" height="1.600" fill="#a8a8a8"/><rect x="414.200" y="257.8" width="1.600" height="1.600" fill="#a8a8a8"/><rect x="411.400" y="261.0" width="1.600" height="1.600" fill="#a8a8a8"/><rect x="414.200" y="261.0" width="1.600" height="1.600" fill="#a8a8a8"/><rect x="411.400" y="264.2" width="1.600" height="1.600" fill="#a8a8a8"/><rect x="414.200" y="264.2" width="1.600" height="1.600" fill="#a8a8a8"/><rect x="425.500" y="258.5" width="6.200" height="6.200" stroke="#a0a0a0" stroke-width="1" fill="#383838"/><path d="M425.500 260.3h6.200" stroke="#a0a0a0" stroke-width=".9"/><rect x="411.400" y="269.8" width="1.600" height="1.600" fill="#a8a8a8"/><rect x="414.200" y="269.8" width="1.600" height="1.600" fill="#a8a8a8"/><rect x="411.400" y="273.0" width="1.600" height="1.600" fill="#a8a8a8"/><rect x="414.200" y="273.0" width="1.600" height="1.600" fill="#a8a8a8"/><rect x="411.400" y="276.2" width="1.600" height="1.600" fill="#a8a8a8"/><rect x="414.200" y="276.2" width="1.600" height="1.600" fill="#a8a8a8"/><rect x="425.500" y="270.5" width="6.200" height="6.200" stroke="#a0a0a0" stroke-width="1" fill="#383838"/><path d="M425.500 272.3h6.200" stroke="#a0a0a0" stroke-width=".9"/><rect x="411.400" y="281.8" width="1.600" height="1.600" fill="#a8a8a8"/><rect x="414.200" y="281.8" width="1.600" height="1.600" fill="#a8a8a8"/><rect x="411.400" y="285.0" width="1.600" height="1.600" fill="#a8a8a8"/><rect x="414.200" y="285.0" width="1.600" height="1.600" fill="#a8a8a8"/><rect x="411.400" y="288.2" width="1.600" height="1.600" fill="#a8a8a8"/><rect x="414.200" y="288.2" width="1.600" height="1.600" fill="#a8a8a8"/><rect x="425.500" y="282.5" width="6.200" height="6.200" stroke="#a0a0a0" stroke-width="1" fill="#383838"/><path d="M425.500 284.3h6.200" stroke="#a0a0a0" stroke-width=".9"/><path d="M440.8 103.8h4.400l-2.200 3z" fill="#9a9a9a"/><path d="M454.5 115.8h4.400l-2.200 3z" fill="#9a9a9a"/><path d="M467.8 127.8h4.400l-2.200 3z" fill="#9a9a9a"/><path d="M468.6 163.1v4.200l3.200-2.100z" fill="#9a9a9a"/><path d="M468.6 175.1v4.200l3.200-2.100z" fill="#9a9a9a"/><path d="M468.6 187.1v4.200l3.200-2.100z" fill="#9a9a9a"/><path d="M468.6 199.1v4.200l3.200-2.100z" fill="#9a9a9a"/><path d="M468.6 211.1v4.200l3.200-2.100z" fill="#9a9a9a"/><path d="M468.6 223.1v4.200l3.200-2.100z" fill="#9a9a9a"/><path d="M468.6 235.1v4.200l3.200-2.100z" fill="#9a9a9a"/><path d="M468.6 247.1v4.200l3.200-2.100z" fill="#9a9a9a"/><path d="M468.6 259.1v4.200l3.200-2.100z" fill="#9a9a9a"/><path d="M468.6 271.1v4.200l3.200-2.100z" fill="#9a9a9a"/><path d="M454 119.700l-7 .4q-1.500.3-1.400 2l1.500 24.500 1.600 40 1 40 .3 40q.2 3.300 3 3.600l8 .6 4 1.700" stroke="#ea262e" stroke-width="1.400" fill="none" stroke-linejoin="round"/></svg>
<div class="a" style="left:322px;top:294px;width:370px;height:.9px;background:#363636"></div>
<div class="a" style="left:322px;top:295.300px;width:370px;height:15px;background:#292a2d"></div>
<div class="a" style="left:338.200px;top:295.800px;width:34.800px;height:14px;background:#000"></div>
<div class="a" style="left:322px;top:310.300px;width:370px;height:15.400px;background:#292a2d;border-bottom:.6px solid #3a3a3a;border-top:.7px solid #38393b"></div>
<div class="a" style="left:322px;top:325.700px;width:363.700px;height:90.300px;background:#222"></div>
<div class="a" style="left:685.700px;top:325.700px;width:6px;height:90.300px;background:#2c2c2c"></div>
<div class="a" style="left:685.700px;top:403px;width:6px;height:13px;background:#383838"></div>
<span id="t114" class="t" style="left:343.40px;top:296.90px;font-size:7.00px;color:#e8e8e8;transform:scaleX(0.9187);">Console</span>
<span id="t115" class="t" style="left:378.20px;top:296.90px;font-size:7.00px;color:#e0e0e0;transform:scaleX(0.8399);">Task</span>
<div class="a" style="left:463.500px;top:312.400px;width:78.300px;height:11.300px;background:#1c1c1c;border:.7px solid #5a5a5a"></div>
<span id="t116" class="t" style="left:363.00px;top:312.00px;font-size:7.00px;color:#dcdcdc;transform:scaleX(0.9206);">appservice (#10)</span>
<span id="t117" class="t" style="left:466.00px;top:312.00px;font-size:7.00px;color:#b4b4b4;transform:scaleX(0.9510);">Filter</span>
<span id="t118" class="t" style="left:546.60px;top:312.00px;font-size:7.00px;color:#dcdcdc;transform:scaleX(0.9255);">Default levels</span>
<span id="t119" class="t" style="left:647.70px;top:312.00px;font-size:7.00px;color:#a4a4a4;transform:scaleX(0.9568);">1 hidden</span>
<svg style="left:322px;top:295px" width="370" height="32" viewBox="322 295 370 32"><g fill="#aeb1b5"><circle cx="332" cy="300.200" r=".75"/><circle cx="332" cy="302.900" r=".75"/><circle cx="332" cy="305.600" r=".75"/><path d="M429.800 316.800h3.800l-1.900 2.600zM588.200 316.800h3.600l-1.800 2.500z" fill="#999"/><circle cx="684" cy="318" r="2.900"/><g stroke="#aeb1b5" stroke-width="1.300"><path d="M684 314.200v7.600M680.200 318h7.600M681.300 315.300l5.400 5.400M686.700 315.300l-5.400 5.400"/></g></g><circle cx="684" cy="318" r="1.250" fill="#2a2b2d"/><g stroke="#aeb1b5" stroke-width=".8" fill="none"><path d="M681.600 300.300l4.800 4.800M686.400 300.300l-4.800 4.800"/><rect x="327.700" y="314.600" width="7.400" height="6.800"/><path d="M329.700 314.600v6.800"/><circle cx="347.500" cy="318" r="3.300"/><path d="M345.200 315.700l4.600 4.600"/><path d="M445.300 318q4.100-4.200 8.200 0-4.100 4.200-8.200 0z"/><circle cx="449.400" cy="318" r="1.300"/></g><path d="M331 316.300v3.400l2.600-1.700z" fill="#aeb1b5"/><path d="M358 313.500v9M440.300 313.500v9M459.700 313.500v9M642.900 313.500v9" stroke="#444" stroke-width=".6"/></svg>
<div class="a" style="left:322px;top:334px;width:363.700px;height:19.400px;background:#332b00;border-top:.6px solid #5c4a00;border-bottom:.6px solid #5c4a00"></div>
<div class="a" style="left:322px;top:365px;width:363.700px;height:11.300px;background:#332b00;border-top:.6px solid #5c4a00;border-bottom:.6px solid #5c4a00"></div>
<div class="a" style="left:322px;top:396px;width:363.700px;height:.6px;background:#2f2f2f"></div>
<div class="a" style="left:329.800px;top:335px;width:.6px;height:18px;background:#6a6a6a"></div>
<span id="t120" class="t m b" style="left:336.00px;top:322.60px;font-size:6.50px;color:#f0f0f0;letter-spacing:-0.231px;">Sat Aug 13 2022 10:15:24 GMT+0800 (</span><span id="t121" class="t m b" style="left:464.45px;top:322.60px;font-size:7.20px;color:#f0f0f0;letter-spacing:0.140px;">中国标准时间</span><span id="t122" class="t m b" style="left:508.43px;top:322.60px;font-size:6.50px;color:#f0f0f0;letter-spacing:-0.236px;">) </span><span id="t123" class="t m b" style="left:515.77px;top:322.60px;font-size:7.20px;color:#f0f0f0;letter-spacing:0.139px;">游客模式</span>
<span id="t124" class="t m u b" style="left:603.70px;top:322.70px;font-size:6.50px;color:#d0d0d0;letter-spacing:-0.231px;">VM14 asdebug.js:10</span>
<span id="t125" class="t m" style="left:349.90px;top:333.70px;font-size:7.00px;color:#e8dcb0;">请注意游客模式下，调用</span><span id="t126" class="t m" style="left:426.90px;top:333.70px;font-size:6.50px;color:#e8dcb0;letter-spacing:-0.231px;"> wx.operateWXData </span><span id="t127" class="t m" style="left:492.96px;top:333.70px;font-size:7.00px;color:#e8dcb0;">是受限的</span><span id="t128" class="t m" style="left:520.96px;top:333.70px;font-size:6.50px;color:#e8dcb0;letter-spacing:-0.231px;">, API </span><span id="t129" class="t m" style="left:542.98px;top:333.70px;font-size:7.00px;color:#e8dcb0;">的返回是工具的模</span>
<span id="t130" class="t m" style="left:344.20px;top:341.60px;font-size:7.00px;color:#e8dcb0;">拟返回</span>
<span id="t131" class="t m u" style="left:603.70px;top:334.00px;font-size:6.50px;color:#d0d0d0;letter-spacing:-0.231px;">VM14 asdebug.js:10</span>
<span id="t132" class="t m" style="left:336.00px;top:353.50px;font-size:7.00px;color:#e0e0e0;">跳转</span><span id="t133" class="t m" style="left:350.00px;top:353.50px;font-size:6.50px;color:#e0e0e0;letter-spacing:-0.231px;"> /pages/pics/pics</span>
<span id="t134" class="t m u" style="left:523.00px;top:353.90px;font-size:6.50px;color:#c8c8c8;letter-spacing:-0.231px;">index.js?t=wechat&amp;s=…3cbe3256491454b:304</span>
<span id="t135" class="t m" style="left:336.20px;top:364.20px;font-size:6.50px;color:#e8dcb0;letter-spacing:-0.236px;">[</span><span id="t136" class="t m" style="left:339.87px;top:364.20px;font-size:7.00px;color:#e8dcb0;">自动热重载</span><span id="t137" class="t m" style="left:374.87px;top:364.20px;font-size:6.50px;color:#e8dcb0;letter-spacing:-0.236px;">] </span><span id="t138" class="t m" style="left:382.21px;top:364.20px;font-size:7.00px;color:#e8dcb0;">已开启代码文件保存后自动热重载（不支持</span><span id="t139" class="t m" style="left:515.21px;top:364.20px;font-size:6.50px;color:#e8dcb0;letter-spacing:-0.233px;"> json</span><span id="t140" class="t m" style="left:533.56px;top:364.20px;font-size:7.00px;color:#e8dcb0;">）</span>
<span id="t141" class="t m u" style="left:523.00px;top:376.50px;font-size:6.50px;color:#c8c8c8;letter-spacing:-0.231px;">pics.js?t=wechat&amp;s=1…6d9687504c94116:164</span>
<span id="t142" class="t m i" style="left:342.20px;top:385.00px;font-size:6.50px;color:#d8d8d8;letter-spacing:-0.233px;">{data</span>
<span id="t143" class="t m i" style="left:360.55px;top:385.00px;font-size:6.50px;color:#d8d8d8;letter-spacing:-0.231px;">: {…}, header: {…}, statusCode: </span>
<span id="t144" class="t m i" style="left:477.99px;top:385.00px;font-size:6.50px;color:#9980ff;letter-spacing:-0.231px;">200</span>
<span id="t145" class="t m i" style="left:489.00px;top:385.00px;font-size:6.50px;color:#d8d8d8;letter-spacing:-0.231px;">, cookies: Array(0), errMsg: </span>
<span id="t146" class="t m i" style="left:595.43px;top:385.00px;font-size:6.50px;color:#f28b54;letter-spacing:-0.231px;">&quot;request:ok&quot;</span>
<span id="t147" class="t m i" style="left:639.47px;top:385.00px;font-size:6.50px;color:#d8d8d8;letter-spacing:-0.236px;">}</span>
<svg style="left:322px;top:325px" width="370" height="92" viewBox="322 325 370 92"><path d="M328.400 327.300h3.600l-1.800 2.600z" fill="#aaa"/><path d="M345 338.100v3.200l2.300-1.600zM337.200 388.800v3.400l2.400-1.700z" fill="#999"/><path d="M337 336.200l3 5.600h-6zM329 366.900l3 5.600h-6z" fill="#f5c518"/><path d="M337 338.200v2M329 368.900v2" stroke="#4a3a00" stroke-width=".6"/><path d="M327.800 398.800l2.400 2.200-2.400 2.200" stroke="#3b7de0" stroke-width="1" fill="none"/><path d="M358 400.800l4 .9 58-1.400 60 .3 50 .8 40 .4 30 .5 12.500.2" stroke="#ea262e" stroke-width="1.400" fill="none"/></svg>
<svg style="left:530px;top:76px" width="60" height="12" viewBox="530 76 60 12"><path d="M537 80q4-.6 8.500 1.300 5 1.500 12 1.300l20.500-.1" stroke="#ea262e" stroke-width="1.400" fill="none"/></svg>
<svg style="left:568px;top:388px" width="30" height="24" viewBox="568 388 30 24"><g fill="#f2f2f2"><ellipse cx="578.500" cy="398" rx="8" ry="6.800"/><path d="M573 403l-1.800 3.600 4.500-2.200z"/></g><g fill="#222"><circle cx="575.800" cy="395.800" r=".9"/><circle cx="581.300" cy="395.800" r=".9"/></g><ellipse cx="586.500" cy="403.500" rx="7.300" ry="6.200" fill="#f2f2f2" stroke="#222" stroke-width=".8"/><path d="M591 408.500l1.500 2.800-3.800-1.700z" fill="#f2f2f2"/><g fill="#222"><circle cx="584.200" cy="401.800" r=".8"/><circle cx="589" cy="401.800" r=".8"/></g></svg>
<span id="t148" class="t" style="left:599.80px;top:391.50px;font-size:17.50px;color:#fff;transform:scaleX(0.9226);line-height:20px;height:20px">CHENtea</span>
<div class="a" style="left:690.500px;top:0;width:1.500px;height:431px;background:#f4f4f4"></div>
</div>
</body>
</html>
